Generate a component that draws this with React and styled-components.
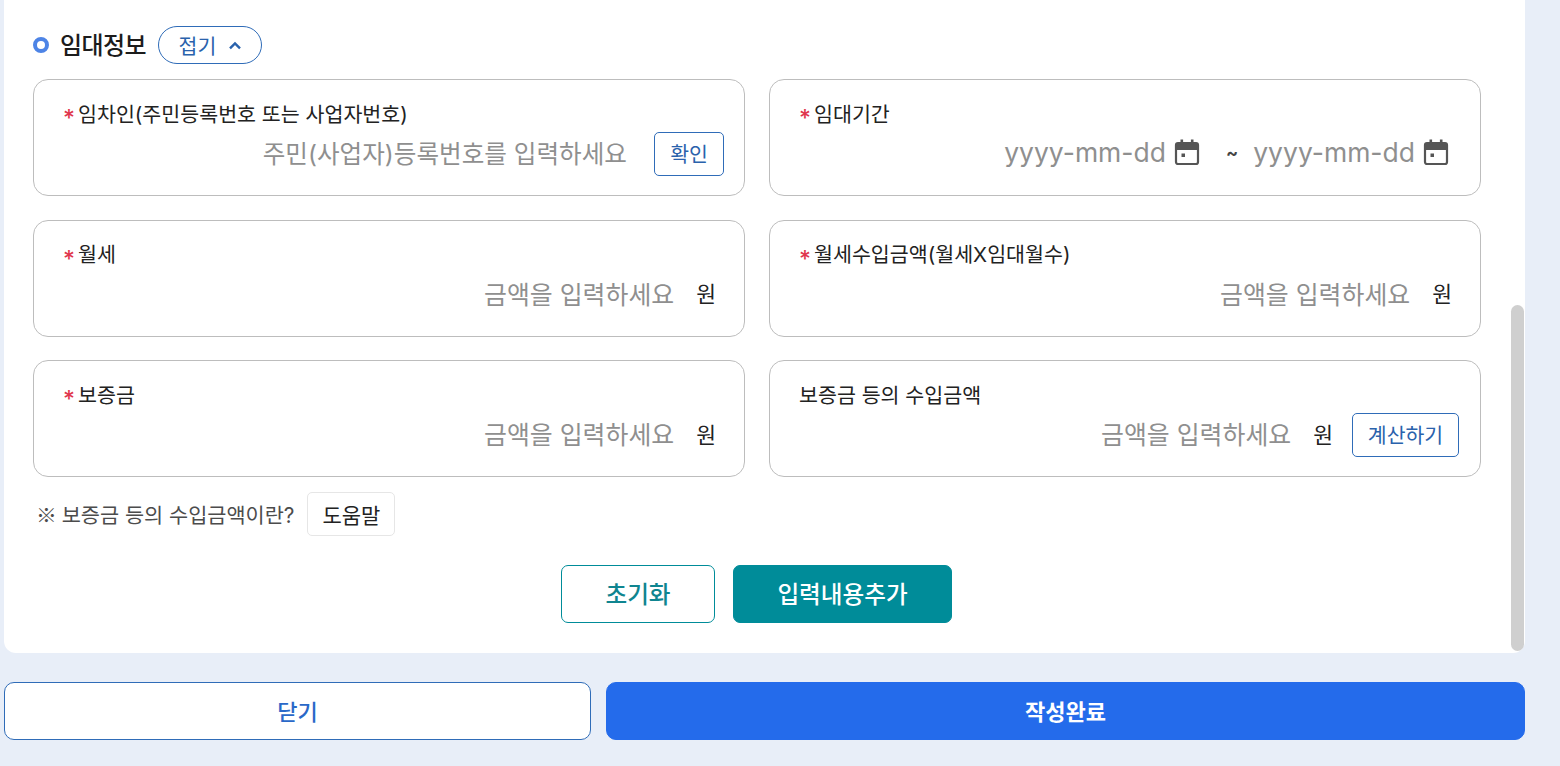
import React from "react";
import styled, { createGlobalStyle } from "styled-components";

const Global = createGlobalStyle`
  html, body { margin: 0; padding: 0; height: 100%; overflow: hidden; background: #e8eef8; }
  body { font-family: Inter, "Noto Sans CJK KR", "Noto Sans", sans-serif; color: #222; }
  * { box-sizing: border-box; }
`;

const Page = styled.div`
  width: 1560px;
  height: 766px;
  padding: 0 35px 0 4px;
  display: flex;
  flex-direction: column;
`;

const Panel = styled.section`
  position: relative;
  height: 653px;
  background: #fff;
  border-radius: 0 0 12px 12px;
  padding: 26px 44px 0 29px;
`;

const Thumb = styled.div`
  position: absolute;
  right: 1px;
  top: 305px;
  width: 13px;
  height: 346px;
  border-radius: 7px;
  background: #cfcfcf;
`;

const Heading = styled.div`
  display: flex;
  align-items: center;
  height: 38px;
`;

const Bullet = styled.span`
  width: 16px;
  height: 16px;
  border-radius: 50%;
  border: 4px solid #4d84e6;
  margin-right: 11px;
`;

const Title = styled.h2`
  margin: 0 12px 0 0;
  padding-bottom: 3px;
  font-size: 24px;
  font-weight: 500;
  letter-spacing: -0.6px;
  color: #1c1c1c;
`;

const Toggle = styled.button`
  display: flex;
  align-items: center;
  justify-content: center;
  gap: 12px;
  width: 104px;
  height: 38px;
  padding: 0 0 0 1px;
  background: #fff;
  border: 1px solid #2f6cb8;
  border-radius: 19px;
  color: #2a62ac;
  font: 400 20.5px Inter, "Noto Sans CJK KR", sans-serif;
`;

const Grid = styled.div`
  display: grid;
  grid-template-columns: 712px 712px;
  grid-auto-rows: 117px;
  column-gap: 24px;
  row-gap: 23.5px;
  margin-top: 15px;
`;

const Card = styled.div`
  border: 1px solid #bdbdbd;
  border-radius: 15px;
  padding: 18px ${(p) => p.$right}px 0 29px;
`;

const Label = styled.div`
  display: flex;
  align-items: center;
  height: 29px;
  font-size: 20.6px;
  font-weight: 400;
  color: #222;
`;

const Star = styled.span`
  flex: none;
  width: 15px;
  padding-top: 12px;
  color: #e0364c;
  font: 500 23px/1 Inter, sans-serif;
`;

const InputRow = styled.div`
  display: flex;
  align-items: center;
  justify-content: flex-end;
  height: 44px;
  margin-top: 3px;
`;

const Placeholder = styled.span`
  font-size: ${(p) => p.$size || 24.9}px;
  color: #8f8f8f;
  white-space: nowrap;
`;

const Unit = styled.span`
  font-size: 21.5px;
  font-weight: 400;
  color: #222;
  margin-left: 22px;
`;

const SmallButton = styled.button`
  height: 44px;
  width: ${(p) => p.$width}px;
  margin: 4px 0 0 ${(p) => p.$gap}px;
  padding: 0 0 2px;
  background: #fff;
  border: 1px solid #2f6cb8;
  border-radius: 5px;
  color: #2a62ac;
  font: 400 20.5px Inter, "Noto Sans CJK KR", sans-serif;
`;

const Tilde = styled.span`
  font-size: 18px;
  font-weight: 700;
  color: #444;
  margin: 0 15px 0 26px;
`;

const CalendarIcon = styled.svg`
  width: 26px;
  height: 28px;
  margin-left: 8px;
  flex: none;
`;

const Note = styled.div`
  display: flex;
  align-items: center;
  height: 44px;
  margin: 15px 0 0 3px;
  font-size: 20.8px;
  color: #4c4c4c;
  white-space: pre;
`;

const Mark = styled.span`
  font-family: "Noto Sans CJK KR", sans-serif;
  margin-right: -1px;
`;

const HelpButton = styled.button`
  width: 88px;
  height: 44px;
  margin-left: 13px;
  padding: 0;
  background: #fff;
  border: 1px solid #e6e6e6;
  border-radius: 5px;
  color: #222;
  font: 400 21px Inter, "Noto Sans CJK KR", sans-serif;
`;

const Actions = styled.div`
  display: flex;
  justify-content: center;
  gap: 18px;
  margin: 29px 1px 0 0;
`;

const ActionButton = styled.button`
  width: ${(p) => p.$width}px;
  height: 58px;
  padding: 0 0 2px;
  border: 1px solid #008c99;
  border-radius: 7px;
  background: ${(p) => (p.$solid ? "#008c99" : "#fff")};
  color: ${(p) => (p.$solid ? "#fff" : "#0f8590")};
  font: 500 23.6px Inter, "Noto Sans CJK KR", sans-serif;
`;

const Footer = styled.div`
  display: flex;
  gap: 15px;
  margin-top: 29px;
`;

const FooterButton = styled.button`
  height: 58px;
  flex: ${(p) => (p.$primary ? "0 0 919px" : "0 0 587px")};
  padding: 0 0 2px;
  border: 1px solid ${(p) => (p.$primary ? "#246beb" : "#2f6cb8")};
  border-radius: 10px;
  background: ${(p) => (p.$primary ? "#246beb" : "#fff")};
  color: ${(p) => (p.$primary ? "#fff" : "#2a68c8")};
  font: ${(p) => (p.$primary ? 700 : 500)} 22px Inter, "Noto Sans CJK KR", sans-serif;
`;

const Calendar = () => (
  <CalendarIcon viewBox="0 0 26 28" aria-hidden="true">
    <rect x="2" y="5" width="22" height="21" rx="2" fill="none" stroke="#555" strokeWidth="2.2" />
    <rect x="2" y="5" width="22" height="7" fill="#555" />
    <rect x="6.5" y="1.5" width="2.6" height="5" fill="#555" />
    <rect x="16.9" y="1.5" width="2.6" height="5" fill="#555" />
    <rect x="7.5" y="15.5" width="3.5" height="3.5" fill="#555" />
  </CalendarIcon>
);

const Chevron = () => (
  <svg width="14" height="9" viewBox="0 0 14 9" aria-hidden="true">
    <path d="M2 7.4 7 2.4l5 5" fill="none" stroke="#2a62ac" strokeWidth="2.4" />
  </svg>
);

const Field = ({ label, required = true, right = 28, children }) => (
  <Card $right={right}>
    <Label>
      {required && <Star>*</Star>}
      {label}
    </Label>
    <InputRow>{children}</InputRow>
  </Card>
);

const Amount = () => (
  <>
    <Placeholder>금액을 입력하세요</Placeholder>
    <Unit>원</Unit>
  </>
);

export default function App() {
  return (
    <Page>
      <Global />
      <Panel>
        <Heading>
          <Bullet />
          <Title>임대정보</Title>
          <Toggle>
            접기 <Chevron />
          </Toggle>
        </Heading>
        <Grid>
          <Field label="임차인(주민등록번호 또는 사업자번호)" right={20}>
            <Placeholder $size={24.6}>주민(사업자)등록번호를 입력하세요</Placeholder>
            <SmallButton $width={70} $gap={27}>확인</SmallButton>
          </Field>
          <Field label="임대기간" right={31}>
            <Placeholder $size={26.5}>yyyy-mm-dd</Placeholder>
            <Calendar />
            <Tilde>~</Tilde>
            <Placeholder $size={26.5}>yyyy-mm-dd</Placeholder>
            <Calendar />
          </Field>
          <Field label="월세"><Amount /></Field>
          <Field label="월세수입금액(월세X임대월수)"><Amount /></Field>
          <Field label="보증금"><Amount /></Field>
          <Field label="보증금 등의 수입금액" required={false} right={21}>
            <Amount />
            <SmallButton $width={107} $gap={19}>계산하기</SmallButton>
          </Field>
        </Grid>
        <Note>
          <Mark>※</Mark> 보증금 등의 수입금액이란?
          <HelpButton>도움말</HelpButton>
        </Note>
        <Actions>
          <ActionButton $width={154}>초기화</ActionButton>
          <ActionButton $width={219} $solid>입력내용추가</ActionButton>
        </Actions>
        <Thumb />
      </Panel>
      <Footer>
        <FooterButton>닫기</FooterButton>
        <FooterButton $primary>작성완료</FooterButton>
      </Footer>
    </Page>
  );
}
